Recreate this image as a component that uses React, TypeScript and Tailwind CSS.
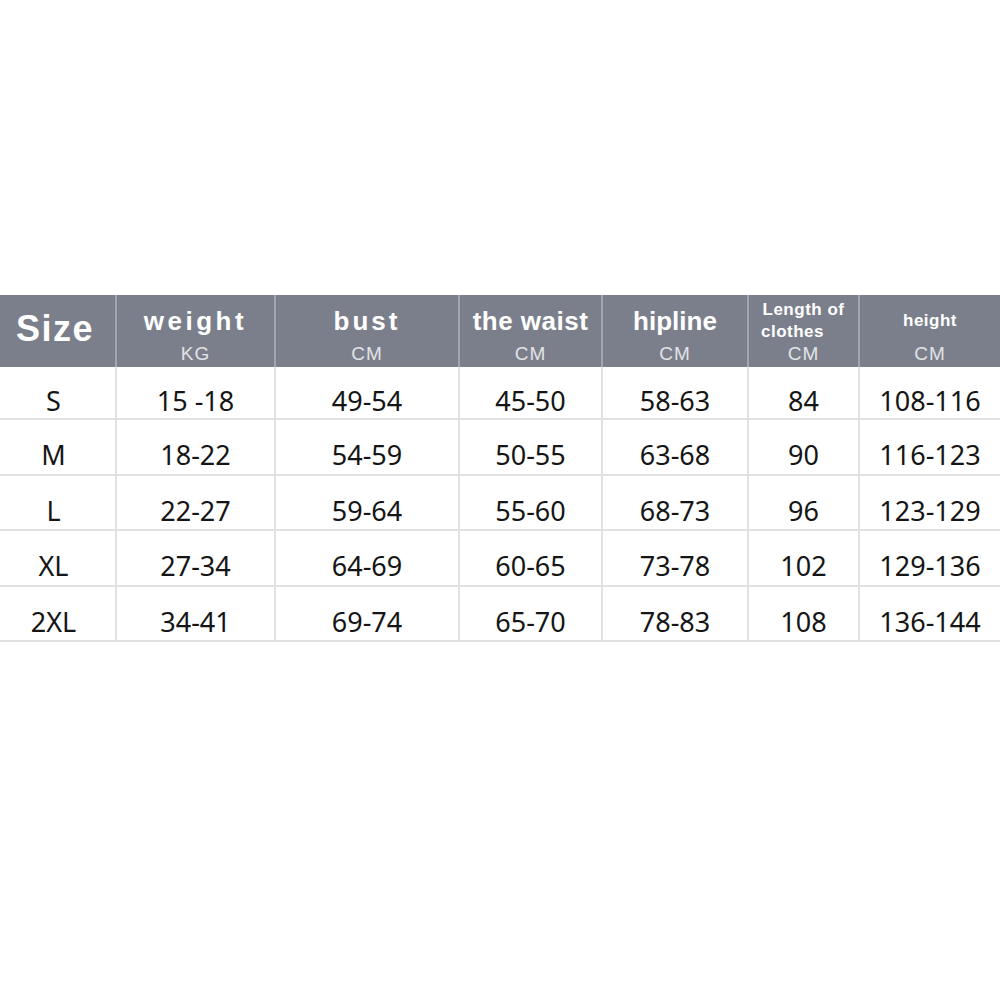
const rows = [
  { h: "h-[53px]", cells: ["S", "15 -18", "49-54", "45-50", "58-63", "84", "108-116"] },
  { h: "h-[56px]", cells: ["M", "18-22", "54-59", "50-55", "63-68", "90", "116-123"] },
  { h: "h-[55px]", cells: ["L", "22-27", "59-64", "55-60", "68-73", "96", "123-129"] },
  { h: "h-[56px]", cells: ["XL", "27-34", "64-69", "60-65", "73-78", "102", "129-136"] },
  { h: "h-[55px]", cells: ["2XL", "34-41", "69-74", "65-70", "78-83", "108", "136-144"] },
];

const grid = "grid grid-cols-[117px_159px_184px_143px_146px_111px_140px]";

export default function App() {
  return (
    <div className="h-[1000px] w-[1000px] bg-white pt-[295px]">
      <div className="w-[1000px]">
        <div className={`${grid} h-[72px] bg-[#7b7f8b] text-white font-['Liberation_Sans',Arial,sans-serif]`}>
          <div className="flex items-center border-r-2 border-[#a3a6ae] pb-[4px] pl-[16px] text-[36px] font-bold tracking-[1.5px]">Size</div>
          <HeaderCell title="weight" unit="KG" track="tracking-[3.5px]" />
          <HeaderCell title="bust" unit="CM" track="tracking-[3px]" />
          <HeaderCell title="the waist" unit="CM" track="tracking-[0.5px]" />
          <HeaderCell title="hipline" unit="CM" track="tracking-[0px]" />
          <div className="flex flex-col items-center border-r-2 border-[#a3a6ae] pt-[3px]">
            <div className="text-[17px] font-bold leading-[23px] tracking-[0.5px]">Length of</div>
            <div className="-mt-[1px] w-full pl-[12px] text-[17px] font-bold leading-[23px] tracking-[0.5px]">clothes</div>
            <div className="text-[19px] leading-[22px] tracking-[1px] text-[#e2e3e6]">CM</div>
          </div>
          <div className="flex flex-col items-center pt-[15px]">
            <div className="text-[17px] font-bold leading-[22px] tracking-[0.5px]">height</div>
            <div className="mt-[11px] text-[19px] leading-[22px] tracking-[1px] text-[#e2e3e6]">CM</div>
          </div>
        </div>
        {rows.map((row, i) => (
          <div key={i} className={`${grid} ${row.h} border-b-2 border-[#e1e1e1] font-['Noto_Sans',sans-serif] text-[27px] leading-[30px] text-[#151515]`}>
            {row.cells.map((cell, j) => (
              <div
                key={j}
                className={`flex items-center justify-center pt-[16px] ${j < 6 ? "border-r-2 border-[#e1e1e1]" : ""} ${j === 0 ? "pr-[8px]" : ""}`}
              >
                {cell}
              </div>
            ))}
          </div>
        ))}
      </div>
    </div>
  );
}

function HeaderCell({ title, unit, track }: { title: string; unit: string; track: string }) {
  return (
    <div className="flex flex-col items-center border-r-2 border-[#a3a6ae] pt-[11px]">
      <div className={`text-[26px] font-bold leading-[30px] ${track}`}>{title}</div>
      <div className="mt-[7px] text-[19px] leading-[22px] tracking-[1px] text-[#e2e3e6]">{unit}</div>
    </div>
  );
}
